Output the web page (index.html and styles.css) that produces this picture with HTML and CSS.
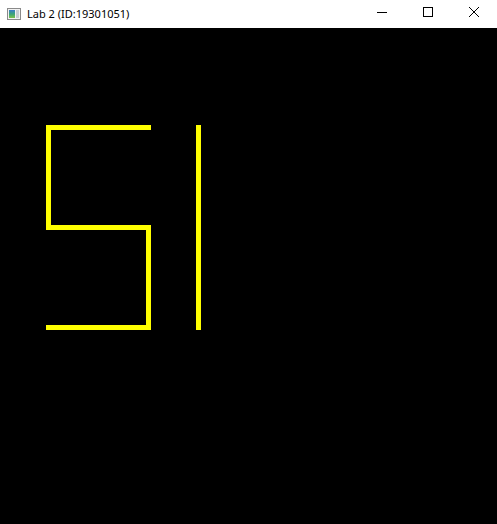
FILE: index.html
```html
<!DOCTYPE html>
<html>
<head>
<meta charset="utf-8">
<link rel="stylesheet" href="styles.css">
</head>
<body>
<div class="window">
  <div class="titlebar">
    <div class="title-left">
      <svg class="app-icon" width="14" height="12" viewBox="0 0 14 12">
        <defs>
          <linearGradient id="g" x1="0" y1="0" x2="0" y2="1">
            <stop offset="0" stop-color="#3a7bc8"/>
            <stop offset="0.5" stop-color="#3aa37a"/>
            <stop offset="1" stop-color="#7cc24a"/>
          </linearGradient>
        </defs>
        <rect x="0.5" y="0.5" width="13" height="11" fill="#f2f2f2" stroke="#8a8a8a"/>
        <rect x="2" y="2" width="6" height="8" fill="url(#g)"/>
        <rect x="9" y="2" width="3" height="8" fill="#c8ccd2"/>
      </svg>
      <span class="title-text">Lab 2 (ID:19301051)</span>
    </div>
    <div class="controls">
      <div class="ctrl">
        <svg width="10" height="10" viewBox="0 0 10 10"><line x1="0" y1="5.5" x2="10" y2="5.5" stroke="#000" stroke-width="1"/></svg>
      </div>
      <div class="ctrl">
        <svg width="10" height="10" viewBox="0 0 10 10"><rect x="0.5" y="0.5" width="9" height="9" fill="none" stroke="#000" stroke-width="1"/></svg>
      </div>
      <div class="ctrl">
        <svg width="10" height="10" viewBox="0 0 10 10"><path d="M0 0 L10 10 M10 0 L0 10" stroke="#000" stroke-width="1"/></svg>
      </div>
    </div>
  </div>
  <div class="canvas">
    <svg class="drawing" width="497" height="496" viewBox="0 0 497 496">
      <rect x="46" y="97" width="105" height="5" fill="#ffff00"/>
      <rect x="46" y="97" width="5" height="105" fill="#ffff00"/>
      <rect x="46" y="197" width="105" height="5" fill="#ffff00"/>
      <rect x="146" y="197" width="5" height="105" fill="#ffff00"/>
      <rect x="46" y="297" width="105" height="5" fill="#ffff00"/>
      <rect x="196" y="97" width="5" height="205" fill="#ffff00"/>
    </svg>
  </div>
</div>
</body>
</html>
```

FILE: styles.css
```css
html, body {
  margin: 0;
  padding: 0;
  background: #000;
}
.window {
  width: 497px;
  height: 524px;
  display: flex;
  flex-direction: column;
}
.titlebar {
  height: 28px;
  background: #fff;
  display: flex;
  justify-content: space-between;
  align-items: stretch;
}
.title-left {
  display: flex;
  align-items: center;
  padding-left: 7px;
  gap: 6px;
}
.app-icon {
  display: block;
}
.title-text {
  font-family: "Noto Sans", "DejaVu Sans", sans-serif;
  font-size: 11px;
  color: #000;
  line-height: 1;
  margin-top: -2px;
}
.controls {
  display: flex;
}
.ctrl {
  width: 46px;
  display: flex;
  align-items: center;
  justify-content: center;
  margin-top: -4px;
}
.ctrl svg {
  display: block;
}
.canvas {
  flex: 1;
  background: #000;
  overflow: hidden;
}
.drawing {
  display: block;
}
```
